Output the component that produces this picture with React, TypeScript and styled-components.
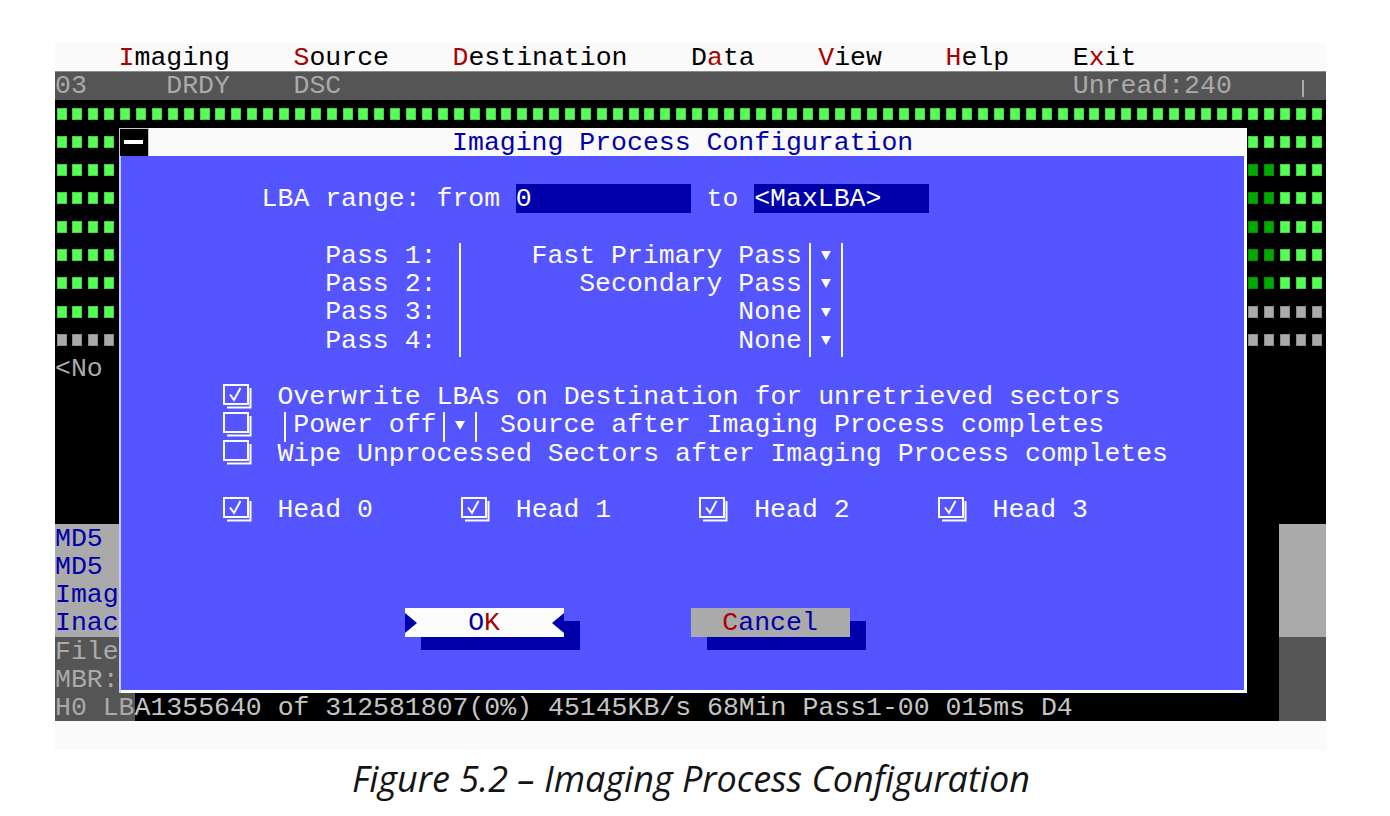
import React from 'react'
import styled, { createGlobalStyle, css } from 'styled-components'

// text-mode cell size: 80 columns x 25 rows
const CW = 15.9
const RH = 28.28

const palette = {
  paper: '#fafafa',
  white: '#fcfcfc',
  blue: '#5555ff',
  navy: '#0000aa',
  red: '#aa0000',
  gray: '#aaaaaa',
  dark: '#555555',
  green: '#55ff55',
  moss: '#00aa00',
  dim: '#c4c4c4',
}

const GlobalStyle = createGlobalStyle`
  html, body {
    margin: 0;
    background: #ffffff;
  }
`

type Place = { $r: number; $c: number; $h?: number; $w?: number }

const place = css<Place>`
  grid-row: ${(p) => p.$r + 1} / span ${(p) => p.$h ?? 1};
  grid-column: ${(p) => p.$c + 1} / span ${(p) => p.$w ?? 1};
`

// the VGA glyphs sit a touch lower in the cell than the mono font does
const textRow = css`
  box-sizing: border-box;
  padding-top: 1px;
  line-height: ${RH}px;
  white-space: pre;
`

const Page = styled.main`
  display: flex;
  flex-direction: column;
  align-items: flex-start;
  padding: 43px 0 0 55px;
`

const Screen = styled.div`
  display: grid;
  grid-template-columns: repeat(80, ${CW}px);
  grid-template-rows: repeat(25, ${RH}px);
  background: #000;
  font-family: 'Liberation Mono', 'DejaVu Sans Mono', monospace;
  font-size: 26.5px;
  color: ${palette.white};
`

const MenuBar = styled.nav`
  grid-row: 1;
  grid-column: 1 / -1;
  display: flex;
  gap: ${4 * CW}px;
  background: ${palette.paper};
  color: #000;
  ${textRow}
  padding-left: ${4 * CW}px;
`

const Hot = styled.span<{ $tone?: string }>`
  color: ${(p) => p.$tone ?? palette.red};
`

const StatusBar = styled.div`
  grid-row: 2;
  grid-column: 1 / -1;
  background: ${palette.dark};
  color: ${palette.gray};
  box-shadow: inset 0 1px 0 #8c8c8c;
  ${textRow}
`

const Tick = styled.span`
  display: inline-block;
  width: 2px;
  height: 17px;
  margin-left: ${CW / 2 - 1}px;
  vertical-align: -4px;
  background: ${palette.gray};
`

const LedGrid = styled.div<Place>`
  ${place}
  display: grid;
  grid-template-columns: repeat(${(p) => p.$w ?? 1}, ${CW}px);
  grid-auto-rows: ${RH}px;
`

type Tone = 'g' | 'd' | 'x'

const ledColor: Record<Tone, string> = {
  g: palette.green,
  d: palette.moss,
  x: palette.gray,
}

const Led = styled.span<{ $tone: Tone }>`
  align-self: center;
  width: 10px;
  height: 12px;
  margin-left: 1.5px;
  background: ${(p) => ledColor[p.$tone]};
  box-shadow: inset 0 0 0 1px rgba(0, 0, 0, 0.18);
`

const Panel = styled.div<Place & { $bg?: string; $fg: string }>`
  ${place}
  background: ${(p) => p.$bg ?? 'transparent'};
  color: ${(p) => p.$fg};
  ${textRow}
`

const Segment = styled.span`
  display: inline-block;
  background: ${palette.dark};
  color: ${palette.gray};
  height: ${RH}px;
  margin-top: -1px;
  padding-top: 1px;
  box-sizing: border-box;
`

const Strip = styled.div`
  grid-row: 25;
  grid-column: 1 / -1;
  background: ${palette.paper};
`

/* dialog window */

const Dialog = styled.section`
  grid-row: 4 / span 20;
  grid-column: 5 / span 71;
  display: grid;
  grid-template-rows: ${RH}px 1fr;
`

const TitleBar = styled.header`
  display: grid;
  background: ${palette.paper};
  color: ${palette.navy};

  > * {
    grid-area: 1 / 1;
  }
`

const CloseBox = styled.span`
  justify-self: start;
  display: flex;
  align-items: center;
  justify-content: center;
  width: 30px;
  height: 100%;
  box-sizing: border-box;
  background: #000;
  border: 1px solid #c8c8c8;

  &::after {
    content: '';
    width: 19px;
    height: 4px;
    background: #fff;
  }
`

const Title = styled.h1`
  justify-self: center;
  margin: 0;
  font: inherit;
  ${textRow}
`

const Body = styled.div`
  display: grid;
  grid-template-columns: repeat(71, ${CW}px);
  grid-template-rows: repeat(19, ${RH}px);
  background: ${palette.blue};
  box-shadow: inset 2px 0 0 #c9c9ff, inset -3px -3px 0 #ffffff;
`

const Text = styled.span<Place & { $align?: 'left' | 'right' }>`
  ${place}
  text-align: ${(p) => p.$align ?? 'left'};
  ${textRow}
`

const Field = styled.span<Place>`
  ${place}
  background: ${palette.navy};
  ${textRow}
`

const VLine = styled.span<Place>`
  ${place}
  justify-self: center;
  width: 2px;
  margin: 2px 0 -3px;
  background: ${palette.white};
`

const Arrow = styled.span<Place>`
  ${place}
  display: flex;
  align-items: center;
  justify-content: center;
  padding-top: 1px;
  box-sizing: border-box;

  &::after {
    content: '';
    border-left: 5px solid transparent;
    border-right: 5px solid transparent;
    border-top: 9px solid ${palette.white};
  }
`

const Box = styled.svg<Place>`
  ${place}
  justify-self: center;
  align-self: center;
`

const Button = styled.div<Place & { $face: string }>`
  ${place}
  display: grid;
  grid-template-columns: ${CW}px 1fr ${CW}px;
  align-items: center;
  background: ${(p) => p.$face};
  color: ${palette.navy};
  box-shadow: 16px 13px 0 ${palette.navy};
`

const ButtonLabel = styled.span`
  grid-column: 2;
  justify-self: center;
  height: 100%;
  ${textRow}
`

const Pointer = styled.span<{ $dir: 'left' | 'right' }>`
  grid-column: ${(p) => (p.$dir === 'right' ? 1 : 3)};
  justify-self: ${(p) => (p.$dir === 'right' ? 'start' : 'end')};
  border-top: 10px solid transparent;
  border-bottom: 10px solid transparent;
  ${(p) =>
    p.$dir === 'right'
      ? css`border-left: 12px solid ${palette.navy};`
      : css`border-right: 12px solid ${palette.navy};`}
`

const Caption = styled.p`
  width: ${80 * CW}px;
  margin: 4px 0 0;
  text-align: center;
  font-family: 'Open Sans', 'Noto Sans', sans-serif;
  font-style: italic;
  font-size: 36px;
  color: #141414;
`

function Hotkey({ text, at, tone }: { text: string; at: number; tone?: string }) {
  return (
    <>
      {text.slice(0, at)}
      <Hot $tone={tone}>{text[at]}</Hot>
      {text.slice(at + 1)}
    </>
  )
}

function Leds({ r, c, rows }: { r: number; c: number; rows: string[] }) {
  return (
    <LedGrid $r={r} $c={c} $h={rows.length} $w={rows[0].length}>
      {rows.flatMap((row, i) =>
        row.split('').map((t, j) => <Led key={`${i}-${j}`} $tone={t as Tone} />)
      )}
    </LedGrid>
  )
}

function CheckBox({ r, c, checked }: { r: number; c: number; checked?: boolean }) {
  return (
    <Box $r={r} $c={c} $w={3} width="30" height="25" viewBox="0 0 30 25" fill="none" stroke="#fcfcfc" strokeWidth="2">
      <rect x="1" y="1" width="24" height="19" />
      <path d="M27.5 4v19.5H4" />
      {checked && <path d="M7 10.5l4 5.5 6.5-12" />}
    </Box>
  )
}

const menu: [string, number][] = [
  ['Imaging', 0],
  ['Source', 0],
  ['Destination', 0],
  ['Data', 1],
  ['View', 0],
  ['Help', 0],
  ['Exit', 1],
]

const passes = ['Fast Primary Pass', 'Secondary Pass', 'None', 'None']

export default function App() {
  return (
    <Page>
      <GlobalStyle />
      <Screen>
        <MenuBar>
          {menu.map(([label, at]) => (
            <span key={label}>
              <Hotkey text={label} at={at} />
            </span>
          ))}
        </MenuBar>

        <StatusBar>
          {'03     DRDY    DSC' + ' '.repeat(46) + 'Unread:240    '}
          <Tick />
        </StatusBar>

        <Leds r={2} c={0} rows={['g'.repeat(80)]} />
        <Leds r={3} c={0} rows={[...Array(7).fill('gggg'), 'xxxx']} />
        <Leds r={3} c={75} rows={['ggggg', ...Array(5).fill('ddggg'), 'xxxxx', 'xxxxx']} />

        <Panel $r={11} $c={0} $w={4} $fg={palette.gray}>{'<No'}</Panel>
        <Panel $r={17} $c={0} $w={4} $h={4} $bg={palette.gray} $fg={palette.navy}>
          {'MD5\nMD5\nImag\nInac'}
        </Panel>
        <Panel $r={21} $c={0} $w={4} $h={2} $bg={palette.dark} $fg={palette.gray}>
          {'File\nMBR:'}
        </Panel>
        <Panel $r={17} $c={77} $w={3} $h={4} $bg={palette.gray} $fg={palette.navy} />
        <Panel $r={21} $c={77} $w={3} $h={3} $bg={palette.dark} $fg={palette.gray} />

        <Panel $r={23} $c={0} $w={77} $fg={palette.dim}>
          <Segment>H0 LB</Segment>
          A1355640 of 312581807(0%) 45145KB/s 68Min Pass1-00 015ms D4
        </Panel>

        <Strip />

        <Dialog>
          <TitleBar>
            <CloseBox />
            <Title>Imaging Process Configuration</Title>
          </TitleBar>

          <Body>
            <Text $r={1} $c={9}>LBA range: from</Text>
            <Field $r={1} $c={25} $w={11}>0</Field>
            <Text $r={1} $c={37}>to</Text>
            <Field $r={1} $c={40} $w={11}>{'<MaxLBA>'}</Field>

            <VLine $r={3} $c={21} $h={4} />
            <VLine $r={3} $c={43} $h={4} />
            <VLine $r={3} $c={45} $h={4} />
            {passes.map((p, i) => (
              <React.Fragment key={i}>
                <Text $r={3 + i} $c={13}>{`Pass ${i + 1}:`}</Text>
                <Text $r={3 + i} $c={22} $w={21} $align="right">{p}</Text>
                <Arrow $r={3 + i} $c={44} />
              </React.Fragment>
            ))}

            <CheckBox r={8} c={6} checked />
            <Text $r={8} $c={10}>Overwrite LBAs on Destination for unretrieved sectors</Text>

            <CheckBox r={9} c={6} />
            <VLine $r={9} $c={10} />
            <Text $r={9} $c={11}>Power off</Text>
            <VLine $r={9} $c={20} />
            <Arrow $r={9} $c={21} />
            <VLine $r={9} $c={22} />
            <Text $r={9} $c={24}>Source after Imaging Process completes</Text>

            <CheckBox r={10} c={6} />
            <Text $r={10} $c={10}>Wipe Unprocessed Sectors after Imaging Process completes</Text>

            {[0, 1, 2, 3].map((h) => (
              <React.Fragment key={h}>
                <CheckBox r={12} c={6 + h * 15} checked />
                <Text $r={12} $c={10 + h * 15}>{`Head ${h}`}</Text>
              </React.Fragment>
            ))}

            <Button $r={16} $c={18} $w={10} $face={palette.white}>
              <Pointer $dir="right" />
              <ButtonLabel>
                <Hotkey text="OK" at={1} />
              </ButtonLabel>
              <Pointer $dir="left" />
            </Button>
            <Button $r={16} $c={36} $w={10} $face={palette.gray}>
              <ButtonLabel>
                <Hotkey text="Cancel" at={0} />
              </ButtonLabel>
            </Button>
          </Body>
        </Dialog>
      </Screen>

      <Caption>Figure 5.2 – Imaging Process Configuration</Caption>
    </Page>
  )
}
